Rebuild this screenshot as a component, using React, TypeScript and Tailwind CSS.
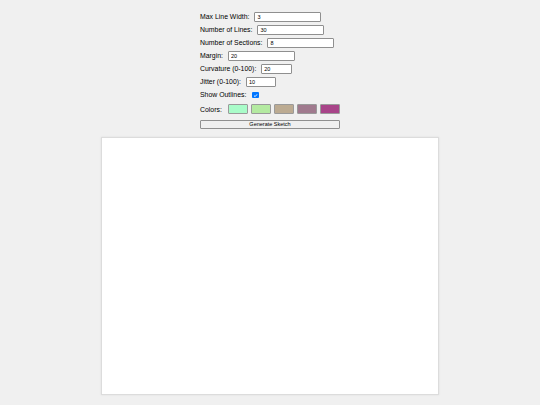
import { FC } from "react";

const fields = [
  { label: "Max Line Width:", value: "3", width: "w-[67px]" },
  { label: "Number of Lines:", value: "30", width: "w-[67px]" },
  { label: "Number of Sections:", value: "8", width: "w-[67px]" },
  { label: "Margin:", value: "20", width: "w-[67px]" },
  { label: "Curvature (0-100):", value: "20", width: "w-[31px]" },
  { label: "Jitter (0-100):", value: "10", width: "w-[30px]" },
];

const colors = ["#a9fcc9", "#b4eaa1", "#bcab92", "#a07a8e", "#a84489"];

const App: FC = () => {
  return (
    <div
      className="min-h-[405px] w-full bg-[#f0f0f0] flex flex-col items-center pt-[10.5px] text-black"
      style={{ fontFamily: '"Liberation Sans", Arial, sans-serif' }}
    >
      {/* controls */}
      <div className="w-[140px] flex flex-col">
        {fields.map((f) => (
          <div key={f.label} className="h-[13px] flex items-center gap-[5px]">
            <span className="text-[6.9px] leading-none whitespace-nowrap">
              {f.label}
            </span>
            <input
              readOnly
              value={f.value}
              className={`${f.width} h-[9.5px] bg-white border border-[#8f8f8f] rounded-[1px] px-[2px] text-[5.5px] leading-none outline-none`}
            />
          </div>
        ))}

        <div className="h-[13px] flex items-center gap-[6px]">
          <span className="text-[6.9px] leading-none whitespace-nowrap">
            Show Outlines:
          </span>
          <span className="w-[6.5px] h-[6.5px] rounded-[1px] bg-[#0075ff] flex items-center justify-center">
            <svg viewBox="0 0 10 10" className="w-[5px] h-[5px]">
              <path
                d="M2 5.2 L4.2 7.3 L8 2.8"
                fill="none"
                stroke="white"
                strokeWidth="1.8"
              />
            </svg>
          </span>
        </div>

        {/* colours */}
        <div className="h-[15px] flex items-center">
          <span className="text-[6.9px] leading-none mr-[6px] mt-[2px]">
            Colors:
          </span>
          <div className="flex gap-[3px]">
            {colors.map((c) => (
              <span
                key={c}
                className="w-[20px] h-[10px] border border-[#9a9a9a] rounded-[1px]"
                style={{ backgroundColor: c }}
              />
            ))}
          </div>
        </div>

        <button className="mt-[3.5px] h-[9px] w-full bg-[#efefef] border border-[#8f8f8f] rounded-[1px] text-[5.5px] leading-none">
          Generate Sketch
        </button>
      </div>

      {/* canvas */}
      <div className="mt-[7.5px] w-[338px] h-[258px] bg-white border border-[#dcdcdc] shadow-[0_0_2px_rgba(0,0,0,0.08)]" />
    </div>
  );
};

export default App;
